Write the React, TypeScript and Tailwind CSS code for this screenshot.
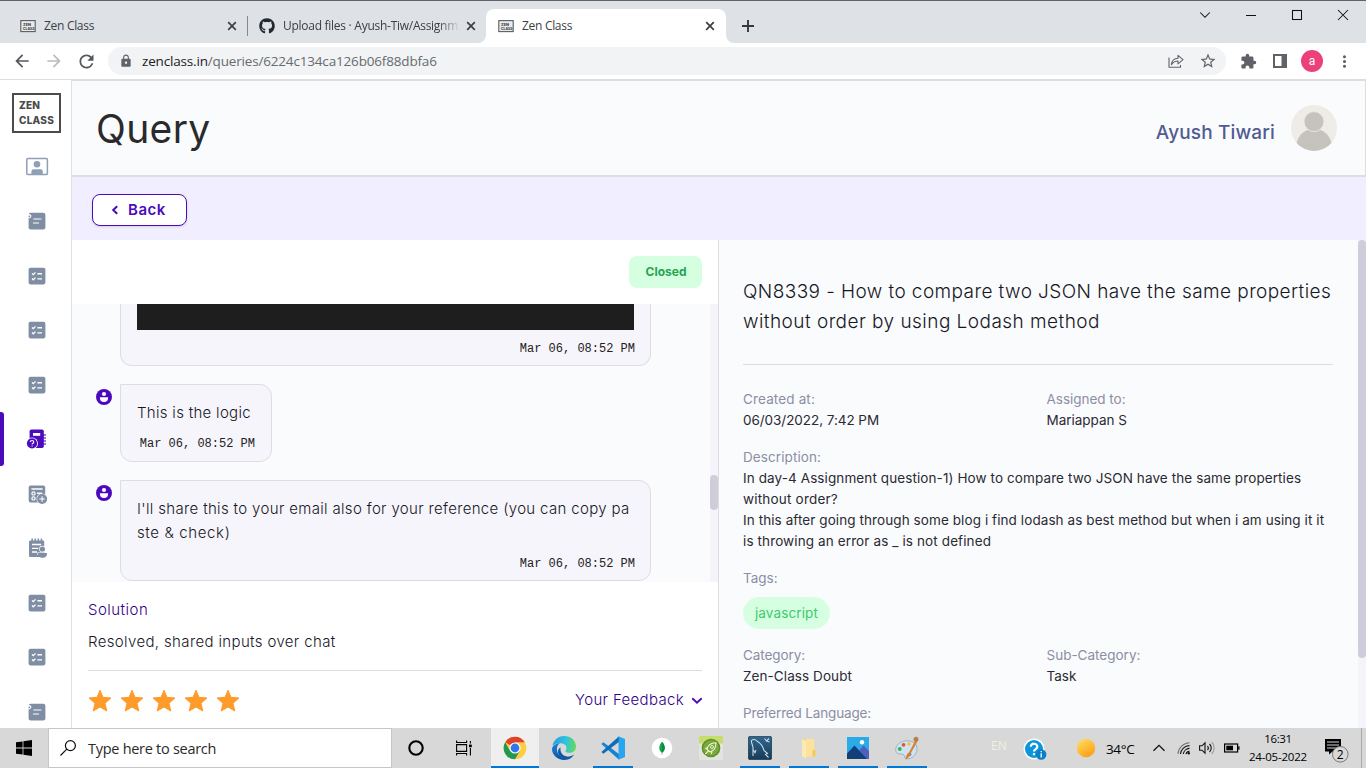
import type { ReactNode } from "react";
import { FaGithub } from "react-icons/fa";
import {
  MdArrowBack,
  MdArrowForward,
  MdExtension,
  MdLock,
  MdMoreVert,
  MdRefresh,
  MdStarBorder,
} from "react-icons/md";

const SLATE = "#7f8ea3";
const PURPLE = "#4b0bbd";

function Favicon() {
  return (
    <svg width="16" height="16" viewBox="0 0 16 16" className="shrink-0">
      <rect x="0.8" y="2.6" width="14.4" height="11" fill="#e9eaec" stroke="#5a5d60" strokeWidth="1.1" />
      <text x="3" y="7.6" fontFamily="Inter" fontWeight="800" fontSize="3.9" fill="#444">ZEN</text>
      <text x="3" y="11.7" fontFamily="Inter" fontWeight="800" fontSize="3.4" fill="#444">CLASS</text>
    </svg>
  );
}

function TabClose() {
  return (
    <svg width="10" height="10" viewBox="0 0 10 10" className="shrink-0">
      <path d="M1.2 1.2 8.8 8.8M8.8 1.2 1.2 8.8" stroke="#3c4043" strokeWidth="1.7" />
    </svg>
  );
}

function TabStrip() {
  return (
    <div className="flex h-[43px] shrink-0 border-t border-[#606368] bg-[#dee1e6] pt-2 text-[#3c4043]">
      <div className="flex h-[34px] w-[247px] items-center pr-[10px] pl-5">
        <Favicon />
        <span className="ml-2 flex-1 font-['Open_Sans',sans-serif] text-[12px] tracking-[-0.3px]">Zen Class</span>
        <TabClose />
      </div>
      <div className="mt-[7px] h-5 w-px bg-[#85888d]" />
      <div className="flex h-[34px] w-[238px] items-center pr-[10px] pl-[11px]">
        <FaGithub size={16} color="#24292f" className="shrink-0" />
        <span className="ml-2 w-[177px] overflow-hidden mask-r-from-88% font-['Open_Sans',sans-serif] text-[12px] tracking-[-0.27px] whitespace-nowrap">
          Upload files · Ayush-Tiw/Assignm
        </span>
        <span className="ml-auto flex"><TabClose /></span>
      </div>
      <div className="relative flex h-[34px] w-[240px] items-center rounded-t-lg bg-white pr-[11px] pl-3">
        <svg className="absolute bottom-0 -left-2" width="8" height="8"><path d="M8 0V8H0A8 8 0 0 0 8 0Z" fill="#fff" /></svg>
        <svg className="absolute -right-2 bottom-0" width="8" height="8"><path d="M0 0V8H8A8 8 0 0 1 0 0Z" fill="#fff" /></svg>
        <Favicon />
        <span className="ml-2 flex-1 font-['Open_Sans',sans-serif] text-[12px] tracking-[-0.3px]">Zen Class</span>
        <TabClose />
      </div>
      <svg className="mt-[11px] ml-4" width="12" height="12" viewBox="0 0 12 12">
        <path d="M6 0V12M0 6H12" stroke="#35383c" strokeWidth="1.9" />
      </svg>
      <div className="ml-auto flex h-3 text-black">
        <WinButton><path d="M1.2 3.5 6 8.3 10.8 3.5" /></WinButton>
        <WinButton><path d="M1 6.5H11" /></WinButton>
        <WinButton><rect x="1.5" y="1.5" width="9" height="9" /></WinButton>
        <WinButton><path d="M1 1 11 11M11 1 1 11" /></WinButton>
      </div>
    </div>
  );
}

function WinButton({ children }: { children: ReactNode }) {
  return (
    <div className="flex w-[46px] justify-center">
      <svg width="12" height="12" viewBox="0 0 12 12" fill="none" stroke="#111" strokeWidth="1.05">{children}</svg>
    </div>
  );
}

function Slot({ children }: { children: ReactNode }) {
  return <div className="flex w-8 shrink-0 items-center justify-center">{children}</div>;
}

function Toolbar() {
  return (
    <div className="flex h-[37px] shrink-0 items-center border-b border-[#dcdddf] bg-white pl-[6px] text-[#5f6368]">
      <Slot><MdArrowBack size={20} color="#54585d" /></Slot>
      <Slot><MdArrowForward size={20} color="#babcbe" /></Slot>
      <Slot><MdRefresh size={21} color="#54585d" /></Slot>
      <div className="ml-[6px] flex h-7 w-[1118px] items-center rounded-full bg-[#f1f3f4] px-[2px]">
        <Slot><MdLock size={14} /></Slot>
        <span className="flex-1 font-['Open_Sans',sans-serif] text-[13.5px] tracking-[-0.17px] text-[#676b70]">
          <span className="text-[#202124]">zenclass.in</span>/queries/6224c134ca126b06f88dbfa6
        </span>
        <Slot>
          <svg width="16" height="16" viewBox="0 0 16 16" fill="none" stroke="#5f6368" strokeWidth="1.1">
            <path d="M1 4.5V14.2H12.5V12M3.4 11.6C3.8 7.8 6 5.4 10 5.2V2.4L15 6.6L10 10.8V8C7 8 5 9.3 3.4 11.6Z" strokeLinejoin="round" />
          </svg>
        </Slot>
        <Slot><MdStarBorder size={18} /></Slot>
      </div>
      <div className="ml-[6px] flex">
        <Slot><MdExtension size={17} /></Slot>
        <Slot>
          <svg width="14" height="14" viewBox="0 0 14 14">
            <rect width="14" height="14" fill="#5f6368" />
            <rect x="2" y="2" width="6.5" height="10" fill="#fff" />
          </svg>
        </Slot>
        <Slot>
          <span className="flex size-[22px] items-center justify-center rounded-full bg-[#ec407a] pb-px font-['Roboto',sans-serif] text-[12px] text-white">a</span>
        </Slot>
        <Slot><MdMoreVert size={19} /></Slot>
      </div>
    </div>
  );
}

function ProfileIcon() {
  return (
    <svg width="24" height="24" viewBox="0 0 24 24">
      <rect x="1.8" y="3.4" width="20.6" height="16.2" rx="1.2" fill="#fff" stroke="#8ea0b6" strokeWidth="1.5" />
      <circle cx="12" cy="9.3" r="3.3" fill="#8ea0b6" />
      <path d="M6.4 19.4V16.4A2.2 2.2 0 0 1 8.6 14.2H15.6A2.2 2.2 0 0 1 17.8 16.4V19.4Z" fill="#8ea0b6" />
    </svg>
  );
}

function NoteIcon() {
  return (
    <svg width="24" height="24" viewBox="0 0 24 24">
      <rect x="3.6" y="3.8" width="16.8" height="16.6" rx="2.2" fill={SLATE} />
      <path d="M8.8 10H16M8.5 14H13.5" stroke="#fff" strokeWidth="1.2" strokeLinecap="round" />
      <path d="M3 5H5L6.6 7.1 5 9.4 3 8.4" fill="#fff" />
      <circle cx="4.4" cy="7.3" r="0.9" fill={SLATE} />
    </svg>
  );
}

function ChecklistIcon() {
  return (
    <svg width="24" height="24" viewBox="0 0 24 24">
      <rect x="3.6" y="3.8" width="16.8" height="16.6" rx="1.8" fill={SLATE} />
      <path d="M7 9.4 8.3 10.6 10.5 8.4M7 14.6 8.3 15.8 10.5 13.6" stroke="#fff" strokeWidth="1.3" fill="none" />
      <path d="M12.4 9.7H17M12.4 14.9H17" stroke="#fff" strokeWidth="1.4" />
    </svg>
  );
}

function QueryIcon() {
  return (
    <svg width="24" height="24" viewBox="0 0 24 24">
      <path d="M18 8H21M18 11H21M18 14H21M18 17H21" stroke={PURPLE} strokeWidth="1.5" strokeOpacity="0.75" />
      <rect x="4.6" y="2.4" width="14.2" height="18.6" rx="1.8" fill={PURPLE} />
      <rect x="8" y="6" width="7.2" height="2.8" fill="#fff" />
      <circle cx="7" cy="16.4" r="5.9" fill="#fff" />
      <circle cx="7" cy="16.4" r="5.1" fill={PURPLE} />
      <path d="M5.3 15.1C5.3 12.9 8.8 12.9 8.8 15.1C8.8 16.4 7.1 16.2 7.1 17.4M7.1 18.4V19.5" stroke="#fff" strokeWidth="1.1" fill="none" />
    </svg>
  );
}

function TaskAddIcon() {
  return (
    <svg width="24" height="24" viewBox="0 0 24 24">
      <rect x="3.7" y="3.6" width="16.5" height="16.8" rx="2" fill={SLATE} />
      <path d="M6.4 7H17.6M12 11.2H17" stroke="#fff" strokeWidth="1.4" />
      <circle cx="8.5" cy="11.4" r="1.6" fill="none" stroke="#fff" strokeWidth="1.2" />
      <circle cx="8.5" cy="16.4" r="1.6" fill="none" stroke="#fff" strokeWidth="1.2" />
      <circle cx="17.1" cy="17" r="5.6" fill="#fff" />
      <circle cx="17.1" cy="17" r="5" fill={SLATE} />
      <path d="M17.1 14.2V19.8M14.3 17H19.9" stroke="#fff" strokeWidth="1.1" />
    </svg>
  );
}

function NotepadUserIcon() {
  return (
    <svg width="24" height="24" viewBox="0 0 24 24">
      <path d="M4 6A1.5 1.5 0 0 1 5.5 4.4H17.5A1.5 1.5 0 0 1 19.2 6V19.4A1.5 1.5 0 0 1 17.7 21H5.6A1.5 1.5 0 0 1 4 19.4Z" fill={SLATE} />
      <path d="M7.2 2.6V5M10.2 2.6V5M13.3 2.6V5M16.4 2.6V5" stroke={SLATE} strokeWidth="1.5" />
      <path d="M7 8.5H16.2M7 12.3H13.2M7 16H12" stroke="#fff" strokeWidth="1.3" />
      <circle cx="17.4" cy="13" r="3.3" fill="#fff" />
      <path d="M12.4 16.4H22V19H12.4Z" fill="#fff" />
      <circle cx="17.4" cy="13" r="2.6" fill={SLATE} />
      <path d="M13 17H22C22.2 20 20.7 21.8 17.5 21.8S12.8 20 13 17Z" fill={SLATE} />
    </svg>
  );
}

const navIcons = [
  ProfileIcon,
  NoteIcon,
  ChecklistIcon,
  ChecklistIcon,
  ChecklistIcon,
  QueryIcon,
  TaskAddIcon,
  NotepadUserIcon,
  ChecklistIcon,
  ChecklistIcon,
  NoteIcon,
];

function Sidebar() {
  return (
    <nav className="flex w-[72px] shrink-0 flex-col overflow-hidden border-r border-[#e0e0e3] bg-white">
      <div className="mt-[13px] ml-3 flex h-10 w-[49px] shrink-0 flex-col border-[2.5px] border-[#4c4c4c] pt-[3px] pl-[5px] font-['Inter',sans-serif] text-[10px] leading-[15px] font-extrabold text-[#4a4a4a]">
        <span className="tracking-[0.2px]">ZEN</span>
        <span className="tracking-[0.25px]">CLASS</span>
      </div>
      <div className="mt-[6.5px] flex flex-col">
        {navIcons.map((Icon, i) => (
          <div key={i} className="flex h-[54.5px] shrink-0 items-center">
            <span className={i === 5 ? "h-[54px] w-1 rounded-r-[3px] bg-[#4b0bbd]" : "w-1"} />
            <span className="ml-[21px]"><Icon /></span>
          </div>
        ))}
      </div>
    </nav>
  );
}

function Header() {
  return (
    <header className="flex h-[97px] shrink-0 items-center border-t border-r border-b-2 border-[#dddee0] bg-[#fafbfd] pr-7 pl-6">
      <h1 className="mt-[3px] text-[39px] font-normal tracking-[0.35px] text-[#2a2a2c]">Query</h1>
      <span className="mt-[11px] ml-auto text-[19px] font-medium tracking-[0.15px] text-[#515c91]">Ayush Tiwari</span>
      <svg className="ml-4" width="46" height="46" viewBox="0 0 46 46">
        <circle cx="23" cy="23" r="23" fill="#efece7" />
        <path d="M5.6 38C8 29 14 24 23 24S38 29 40.4 38A23 23 0 0 1 5.6 38Z" fill="#c6c3bd" />
        <circle cx="23" cy="16.6" r="10" fill="#c6c3bd" stroke="#efece7" strokeWidth="0.8" />
      </svg>
    </header>
  );
}

function Stamp() {
  return (
    <span className="self-end font-['Liberation_Mono',monospace] text-[12px] leading-4 text-[#222]">Mar 06, 08:52 PM</span>
  );
}

function MentorAvatar() {
  return (
    <svg className="mt-[5px] mr-2 shrink-0" width="16" height="16" viewBox="0 0 16 16">
      <circle cx="8" cy="8" r="8" fill={PURPLE} />
      <circle cx="8" cy="5" r="2.1" fill="#fff" />
      <path d="M4 8.2H12V9.2A4 3.8 0 0 1 4 9.2Z" fill="#fff" />
    </svg>
  );
}

function Chat() {
  return (
    <div className="flex h-[278px] overflow-hidden bg-[#fafbfd]">
      <div className="flex flex-1 flex-col pl-6">
        <div className="ml-6 flex h-[62px] w-[531px] shrink-0 flex-col rounded-b-xl border border-t-0 border-[#dddde2] bg-[#f6f5fb] pr-[15px] pl-4">
          <div className="mb-[11px] h-[26px] w-[497px] bg-[#1e1e1e]" />
          <Stamp />
        </div>
        <div className="mt-[18px] flex shrink-0">
          <MentorAvatar />
          <div className="flex h-[78px] w-[152px] flex-col rounded-xl rounded-tl-none border border-[#dddde2] bg-[#f6f5fb] px-4 pt-4">
            <p className="text-[15px] leading-6 font-light tracking-[0.3px] text-[#17171f]">This is the logic</p>
            <span className="mt-[11px] flex flex-col"><Stamp /></span>
          </div>
        </div>
        <div className="mt-[18px] flex shrink-0">
          <MentorAvatar />
          <div className="flex h-[101px] w-[531px] flex-col rounded-xl rounded-tl-none border border-[#dddde2] bg-[#f6f5fb] pt-4 pr-[15px] pl-4">
            <p className="text-[15px] leading-6 font-light tracking-[0.34px] whitespace-nowrap text-[#17171f]">
              I'll share this to your email also for your reference (you can copy pa
              <br />
              <span className="tracking-[0.62px]">ste &amp; check)</span>
            </p>
            <span className="mt-[11px] flex flex-col"><Stamp /></span>
          </div>
        </div>
      </div>
      <div className="w-2 bg-[#f5f4fb] pt-[171px]">
        <div className="h-[35px] rounded-full bg-[#cecdd9]" />
      </div>
    </div>
  );
}

function Star() {
  return (
    <svg width="24" height="24" viewBox="0 0 24 24">
      <path
        d="M12 1.2 15 8.3 23 9 17 14.3 18.8 22 12 18 5.2 22 7 14.3 1 9 9 8.3Z"
        fill="#ff9a2b"
        stroke="#ff9a2b"
        strokeWidth="1"
        strokeLinejoin="round"
      />
    </svg>
  );
}

function Conversation() {
  return (
    <section className="flex w-[647px] shrink-0 flex-col overflow-hidden border-r border-[#dddde0] bg-white">
      <div className="flex h-16 shrink-0 items-center justify-end pr-4">
        <span className="flex h-8 w-[73px] items-center justify-center rounded-lg bg-[#d6ffe1] pl-px text-[12px] font-bold text-[#21a552]">Closed</span>
      </div>
      <Chat />
      <div className="mx-4 flex flex-1 flex-col text-[15px] font-light">
        <p className="mt-4 leading-6 tracking-[0.48px] text-[#30008a]">Solution</p>
        <p className="mt-2 leading-6 tracking-[0.36px] text-[#17171f]">Resolved, shared inputs over chat</p>
        <div className="mt-4 flex items-center border-t border-[#dddde0] pt-[18px]">
          <div className="flex gap-2">
            <Star /><Star /><Star /><Star /><Star />
          </div>
          <span className="mb-[2px] ml-auto tracking-[0.34px] text-[#30008a]">Your Feedback</span>
          <svg className="ml-[7px] -mr-px" width="12" height="8" viewBox="0 0 12 8">
            <path d="M1.8 1.8 6 5.8 10.2 1.8" fill="none" stroke={PURPLE} strokeWidth="1.9" strokeLinecap="round" />
          </svg>
        </div>
      </div>
    </section>
  );
}

const LABEL = "text-[#8a8fa3]";

function Details() {
  return (
    <section className="flex flex-1 overflow-hidden bg-[#fafbfd]">
      <div className="flex flex-1 flex-col pt-[37px] pr-[25px] pl-6 text-[13.5px] leading-[21px] whitespace-nowrap text-[#2a2a32]">
        <h2 className="text-[19px] leading-[30px] font-light tracking-[0.42px] text-[#17171f]">
          QN8339 - How to compare two JSON have the same properties
          <br />
          <span className="tracking-[0.46px]">without order by using Lodash method</span>
        </h2>
        <div className="mt-[27px] grid grid-cols-[303.5px_1fr] border-t border-[#dddde0] pt-6">
          <span className={`${LABEL} tracking-[0.14px]`}>Created at:</span>
          <span className={`${LABEL} tracking-[-0.02px]`}>Assigned to:</span>
          <span className="tracking-[-0.05px]">06/03/2022, 7:42 PM</span>
          <span className="tracking-[-0.02px]">Mariappan S</span>
        </div>
        <span className={`${LABEL} mt-4 tracking-[0.09px]`}>Description:</span>
        <p className="tracking-[0.1px]">
          In day-4 Assignment question-1) How to compare two JSON have the same properties
          <br />
          <span className="tracking-[0.2px]">without order?</span>
          <br />
          <span className="tracking-[0.085px]">In this after going through some blog i find lodash as best method but when i am using it it</span>
          <br />
          <span className="tracking-[0.115px]">is throwing an error as _ is not defined</span>
        </p>
        <span className={`${LABEL} mt-4`}>Tags:</span>
        <span className="mt-2 flex h-8 w-[87px] shrink-0 items-center justify-center rounded-full bg-[#d6ffe1] tracking-[0.12px] text-[#3dcb6e]">javascript</span>
        <div className="mt-4 grid grid-cols-[303.5px_1fr]">
          <span className={`${LABEL} tracking-[-0.06px]`}>Category:</span>
          <span className={LABEL}>Sub-Category:</span>
          <span className="tracking-[0.08px]">Zen-Class Doubt</span>
          <span>Task</span>
        </div>
        <span className={`${LABEL} mt-4 tracking-[-0.16px]`}>Preferred Language:</span>
      </div>
      <div className="w-2 bg-[#f5f4fb]">
        <div className="h-[418px] rounded-full bg-[#cecdd9]" />
      </div>
    </section>
  );
}

function ChromeLogo() {
  return (
    <svg width="24" height="24" viewBox="0 0 24 24">
      <circle cx="12" cy="12" r="11.3" fill="#ffcd40" />
      <path d="M12 12 2.2 6.35A11.3 11.3 0 0 1 21.8 6.35H12Z" fill="#e2402f" />
      <path d="M2.2 6.35A11.3 11.3 0 0 0 12 23.3L16.9 14.8 12 12 7.1 14.8Z" fill="#22994f" />
      <circle cx="12" cy="12" r="5.6" fill="#fff" />
      <circle cx="12" cy="12" r="4.4" fill="#3177ea" />
    </svg>
  );
}

function EdgeLogo() {
  return (
    <svg width="24" height="24" viewBox="0 0 24 24">
      <defs>
        <linearGradient id="edgeTop" x1="0" y1="0.4" x2="1" y2="0.5">
          <stop offset="0" stopColor="#2a9fdc" />
          <stop offset="0.55" stopColor="#2fc2df" />
          <stop offset="1" stopColor="#63dc57" />
        </linearGradient>
        <linearGradient id="edgeLow" x1="0" y1="0" x2="0.6" y2="1">
          <stop offset="0" stopColor="#1a86d8" />
          <stop offset="1" stopColor="#0d4fa3" />
        </linearGradient>
      </defs>
      <path d="M.6 10C1.4 4 6.3 0 12 0c7 0 12 4.8 12 10.5 0 4-3 6.3-6.6 6.3-2.6 0-3.9-1-3.9-1.9 0-.8 1-1.2 1-3 0-2.4-2.3-4.6-6.3-4.6C4.5 7.3 1.8 8.6.6 10Z" fill="url(#edgeTop)" />
      <path d="M.3 11.5C1.5 9 4.4 7.3 8.2 7.3c-2.5 1-3.7 3.8-3.2 7 .7 4.4 4 8 9.5 9.4C6.8 25 0 19.6 0 13Z" fill="url(#edgeLow)" />
      <path d="M8.6 11.3C7.4 16.5 11.5 21.5 17.5 20.5c2-.3 3.5-1.1 4.7-1.9C20 22.3 16.5 24 12.9 23.8 7.5 22.5 3 15 8.6 11.3Z" fill="#0c59a4" />
    </svg>
  );
}

function CodeLogo() {
  return (
    <svg width="24" height="24" viewBox="0 0 24 24">
      <path d="M17.5 0.3 24 3V21L17.5 23.7Z" fill="#27a5ef" />
      <path d="M.4 8.1 2.4 6.3 17.8 18V23.6Z" fill="#1583cf" />
      <path d="M.4 15.9 2.4 17.7 17.8 6V.4Z" fill="#0e6db9" />
    </svg>
  );
}

function LeafLogo() {
  return (
    <svg width="24" height="24" viewBox="0 0 24 24">
      <circle cx="12" cy="12" r="10.3" fill="#fff" />
      <path d="M12 5.8C15.8 10 15.5 14.3 12 17C8.5 14.3 8.2 10 12 5.8Z" fill="#12a84e" />
      <path d="M12 5.8C15.8 10 15.5 14.3 12 17Z" fill="#0c8c40" />
      <path d="M12 16V19" stroke="#8aa895" strokeWidth="0.7" />
    </svg>
  );
}

function SeedLogo() {
  return (
    <svg width="24" height="24" viewBox="0 0 24 24">
      <rect x="0" y="0" width="24" height="24" rx="1.5" fill="#e2e5de" />
      <path d="M0 1.5A1.5 1.5 0 0 1 1.5 0H22.5A1.5 1.5 0 0 1 24 1.5V7.5H0Z" fill="#c5dd6c" />
      <circle cx="12" cy="12" r="9.3" fill="#5f8f27" />
      <circle cx="12" cy="12" r="7.8" fill="#7ba83b" />
      <path d="M8 13.5C8.5 9.5 11.5 7 17 6.8C17 12 15 15 11 16L8 13.5ZM8.5 11.5 6.3 12.8M13 15.6 12.3 18M6.3 18 9.5 14.8" fill="none" stroke="#eef6d9" strokeWidth="1.1" />
      <circle cx="13" cy="11" r="1.5" fill="none" stroke="#eef6d9" strokeWidth="0.9" />
    </svg>
  );
}

function DatabaseLogo() {
  return (
    <svg width="24" height="24" viewBox="0 0 24 24">
      <defs>
        <linearGradient id="dbBg" x1="0" y1="0" x2="0" y2="1">
          <stop offset="0" stopColor="#30678d" />
          <stop offset="1" stopColor="#173b58" />
        </linearGradient>
      </defs>
      <rect x="0.4" y="0.4" width="23.2" height="23.2" rx="1.5" fill="url(#dbBg)" stroke="#173a56" strokeWidth="0.8" />
      <path d="M5 20V12C5 9 3 7 3.5 4.5C5 2.8 7.5 3.3 9.5 5.5C13 7.5 15 10.5 16 14.5L19.5 17.5L17.5 18.5L20.5 21.5M5 13.5 7 16.8 8 14" fill="none" stroke="#c8d9e4" strokeWidth="1.1" />
      <path d="M16.5 2.5 18.5 5 21.5 6M18.5 5 21 2.5" fill="none" stroke="#c8d9e4" strokeWidth="1.1" />
    </svg>
  );
}

function FolderLogo() {
  return (
    <svg width="24" height="24" viewBox="0 0 24 24">
      <path d="M5 3H15V21H5Z" fill="#f6d274" />
      <path d="M9 3H17.3V12.5L18.5 14V20.5H9Z" fill="#fbe39c" />
      <path d="M5 3 9.2 5V22.3L5 20.5Z" fill="#fdeab0" />
      <path d="M15.5 20.5V14.5L18.5 13.5V20.5Z" fill="#efc763" />
    </svg>
  );
}

function PhotosLogo() {
  return (
    <svg width="24" height="24" viewBox="0 0 24 24">
      <rect x="1" y="1" width="22" height="22" fill="#2aaae8" />
      <path d="M11 17 17.5 9.5 23 15V23H11Z" fill="#4f5fc0" />
      <path d="M1 17.5 8.5 9.5 21 23H1Z" fill="#123f78" />
      <circle cx="16" cy="6.2" r="2.2" fill="#fff" />
    </svg>
  );
}

function PaintLogo() {
  return (
    <svg width="24" height="24" viewBox="0 0 24 24">
      <path d="M.7 14.5C.3 9 5.5 4.8 12 4.8C18.5 4.8 22.5 8.5 22 13.5C21.5 19.5 16.5 23.3 11.5 22.8C8.5 22.5 10.5 19 8 18.3C5.5 17.6 1.2 18.5.7 14.5Z" fill="#cfe3f1" stroke="#86a9c2" strokeWidth="0.8" />
      <circle cx="4.8" cy="13" r="1.9" fill="#3fae49" />
      <circle cx="8.5" cy="8.8" r="1.9" fill="#e8543a" />
      <circle cx="14" cy="8" r="1.7" fill="#f4bd3a" />
      <circle cx="14.5" cy="18.3" r="1.9" fill="#5a8fd8" />
      <path d="M10.5 23.5C11 19 12.5 17.5 14 16.5L20 5 22 6.2 15.5 17.8C14.8 20.5 13 22.5 10.5 23.5Z" fill="#d9822b" />
      <path d="M18.5 4.5C18 2 19.5 .5 22 .8L23.5 2.5C23.5 5 22.5 6.3 20.5 6.3Z" fill="#b98149" />
    </svg>
  );
}

const apps = [
  { Logo: ChromeLogo, bar: "w-12" },
  { Logo: EdgeLogo, bar: "w-0" },
  { Logo: CodeLogo, bar: "w-10" },
  { Logo: LeafLogo, bar: "w-0" },
  { Logo: SeedLogo, bar: "w-0" },
  { Logo: DatabaseLogo, bar: "w-10" },
  { Logo: FolderLogo, bar: "w-10" },
  { Logo: PhotosLogo, bar: "w-10" },
  { Logo: PaintLogo, bar: "w-10" },
];

function Taskbar() {
  return (
    <footer className="flex h-10 shrink-0 items-center bg-[#d8d8d8] font-['Open_Sans',sans-serif] text-black">
      <div className="flex w-12 shrink-0 justify-center">
        <svg width="16" height="16" viewBox="0 0 16 16">
          <path d="M0 2.3 6.6 1.4V7.6H0ZM7.4 1.3 16 0V7.6H7.4ZM0 8.4H6.6V14.6L0 13.7ZM7.4 8.4H16V16L7.4 14.7Z" />
        </svg>
      </div>
      <div className="flex h-full w-[344px] shrink-0 items-center border border-[#c6c6c6] bg-white pl-[11px]">
        <svg width="16" height="16" viewBox="0 0 16 16" fill="none" stroke="#111" strokeWidth="1.2">
          <circle cx="10.4" cy="5.6" r="5" />
          <path d="M6.8 9.2.5 15.5" />
        </svg>
        <span className="mt-[2px] ml-3 text-[14.5px] tracking-[-0.28px] text-[#2a2a2a]">Type here to search</span>
      </div>
      <div className="flex w-12 shrink-0 justify-center">
        <svg width="16" height="16" viewBox="0 0 16 16"><circle cx="8" cy="8" r="6.7" fill="none" stroke="#000" strokeWidth="2.1" /></svg>
      </div>
      <div className="flex w-12 shrink-0 justify-center">
        <svg width="16" height="16" viewBox="0 0 16 16" fill="none" stroke="#000" strokeWidth="1.1">
          <path d="M.6 .5V2.5H10.6V.5M.6 15.5V13.5H10.6V15.5M.6 4.6H10.6V11.4H.6ZM14.4 1V3.6M14.4 8V15.5" />
          <rect x="13" y="4.6" width="2.8" height="2.6" fill="#000" stroke="none" />
        </svg>
      </div>
      <div className="ml-[2.5px] flex h-full">
        {apps.map(({ Logo, bar }, i) => (
          <div key={i} className="flex w-[49px] justify-center">
            <div className={`flex w-12 flex-col items-center justify-between pt-2 ${i === 0 ? "bg-[#efefef]" : ""}`}>
              <Logo />
              <span className={`h-[2px] bg-[#0078d7] ${bar}`} />
            </div>
          </div>
        ))}
      </div>
      <div className="ml-auto flex h-full items-center">
        <span className="mb-1 w-[32px] text-[12px] text-[#efefe2]">EN</span>
        <svg className="mt-[4px]" width="24" height="24" viewBox="0 0 24 24">
          <circle cx="11" cy="11" r="10.5" fill="#fff" />
          <circle cx="11" cy="11" r="9" fill="#0b96dc" />
          <path d="M7.8 8.8C7.8 4.6 14.4 4.8 14.3 8.8C14.2 11.2 11 11 11 13.5M11 15V17.2" fill="none" stroke="#fff" strokeWidth="2.2" />
          <circle cx="18.2" cy="16.5" r="5.2" fill="#0b7fc4" />
          <path d="M18.2 15.2V19.5M18.2 13V14.2" stroke="#fff" strokeWidth="1.3" />
        </svg>
        <svg className="ml-[29px]" width="20" height="20" viewBox="0 0 20 20">
          <defs>
            <linearGradient id="sun" x1="0.2" y1="0" x2="0.8" y2="1">
              <stop offset="0" stopColor="#ffdc5e" />
              <stop offset="1" stopColor="#ff9a12" />
            </linearGradient>
          </defs>
          <circle cx="10" cy="10" r="9.2" fill="url(#sun)" />
        </svg>
        <span className="mt-[2px] ml-[10px] w-[46px] text-[13.5px] tracking-[-0.35px]">34°C</span>
        <svg width="14" height="14" viewBox="0 0 14 14" fill="none" stroke="#111" strokeWidth="1.3"><path d="M1.5 9.8 7 4.3 12.5 9.8" /></svg>
        <svg className="ml-[11px]" width="14" height="14" viewBox="0 0 14 14" fill="none" stroke="#111" strokeWidth="1.1">
          <path d="M1 13A12 12 0 0 1 12.5 1.8" stroke="#777" />
          <path d="M3.5 13A9.2 9.2 0 0 1 12.5 4.6" />
          <path d="M6.3 13A6.5 6.5 0 0 1 12.5 7.4" />
          <path d="M9 13A3.8 3.8 0 0 1 12.5 10.2" />
          <circle cx="11.8" cy="12.3" r="1.2" fill="#111" stroke="none" />
        </svg>
        <svg className="ml-[8px]" width="17" height="14" viewBox="0 0 17 14" fill="none" stroke="#111" strokeWidth="1.1">
          <path d="M.6 4.8H3L6 1.8V12.2L3 9.2H.6Z" />
          <path d="M8.5 5A3 3 0 0 1 8.5 9" />
          <path d="M10.5 3A5.5 5.5 0 0 1 10.5 11" />
          <path d="M12.7 1A8.5 8.5 0 0 1 12.7 13" stroke="#999" />
        </svg>
        <svg className="ml-[8px]" width="16" height="10" viewBox="0 0 16 10">
          <rect x="0.6" y="1" width="13" height="8" fill="none" stroke="#000" strokeWidth="1.2" />
          <rect x="2.3" y="2.7" width="6.7" height="4.6" />
          <rect x="14.2" y="3.3" width="1.3" height="3.4" />
        </svg>
        <div className="ml-[8px] flex w-[60px] flex-col items-center text-[11.5px] leading-[18px]">
          <span className="tracking-[-0.4px]">16:31</span>
          <span className="tracking-[-0.2px]">24-05-2022</span>
        </div>
        <svg className="mt-[6px] ml-[16px]" width="26" height="26" viewBox="0 0 26 26">
          <path d="M1 1H17V13.5H8.5L5 16.5V13.5H1Z" />
          <path d="M3 4H15M3 7H15M3 10H12" stroke="#d8d8d8" strokeWidth="1" />
          <circle cx="16.3" cy="16.3" r="7.8" fill="#d8d8d8" stroke="#777" strokeWidth="1" />
          <text x="16.3" y="20.5" textAnchor="middle" fontFamily="Open Sans" fontSize="12" fill="#000">2</text>
        </svg>
        <span className="mr-1 ml-[11px] h-full w-px bg-[#a8a8a8]" />
      </div>
    </footer>
  );
}

export default function App() {
  return (
    <div className="flex h-[768px] w-[1366px] flex-col overflow-hidden bg-white font-['Inter',sans-serif]">
      <TabStrip />
      <Toolbar />
      <div className="flex min-h-0 flex-1">
        <Sidebar />
        <main className="flex min-w-0 flex-1 flex-col">
          <Header />
          <div className="flex h-[63px] shrink-0 items-center bg-[#f0eeff] pl-5">
            <button className="mt-[3px] flex h-8 w-[95px] items-center rounded-lg border border-[#4b0bbd] bg-white pl-[17px] text-[15px] font-semibold tracking-[0.5px] text-[#4b0bbd] shadow-sm">
              <svg width="10" height="10" viewBox="0 0 10 10">
                <path d="M7.2 1.2 3.2 5 7.2 8.8" fill="none" stroke={PURPLE} strokeWidth="2" />
              </svg>
              <span className="ml-2">Back</span>
            </button>
          </div>
          <div className="flex min-h-0 flex-1">
            <Conversation />
            <Details />
          </div>
        </main>
      </div>
      <Taskbar />
    </div>
  );
}
